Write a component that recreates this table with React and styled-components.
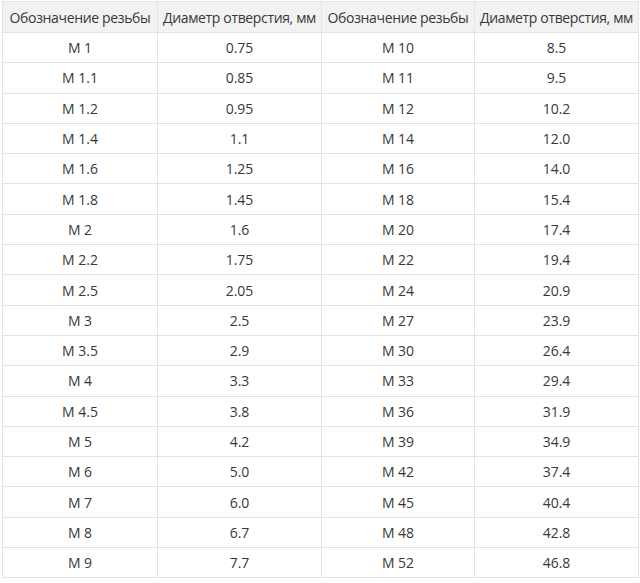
import React from "react";
import styled, { createGlobalStyle } from "styled-components";

const Global = createGlobalStyle`
  html, body { margin: 0; padding: 0; background: #fff; }
  body { font-family: "Open Sans", "Liberation Sans", Arial, sans-serif; }
`;

const Wrap = styled.div`
  padding: 1px 2px 0 2px;
`;

const Table = styled.table`
  border-collapse: collapse;
  width: 636px;
  table-layout: fixed;
  color: #383838;
  font-size: 14px;
`;

const Col = styled.col`
  width: ${(p) => p.$w}px;
`;

const Th = styled.th`
  background: #f2f2f2;
  border: 1px solid #e3e3e3;
  font-weight: 400;
  height: 30px;
  padding: 0 1px;
  text-align: center;
  white-space: nowrap;
  letter-spacing: -0.35px;
  font-size: 14px;
  overflow: hidden;
`;

const Row = styled.tr`
  height: 30.3px;
`;

const Td = styled.td`
  border: 1px solid #e3e3e3;
  text-align: center;
  padding: 0;
`;

const left = [
  ["M 1", "0.75"], ["M 1.1", "0.85"], ["M 1.2", "0.95"], ["M 1.4", "1.1"],
  ["M 1.6", "1.25"], ["M 1.8", "1.45"], ["M 2", "1.6"], ["M 2.2", "1.75"],
  ["M 2.5", "2.05"], ["M 3", "2.5"], ["M 3.5", "2.9"], ["M 4", "3.3"],
  ["M 4.5", "3.8"], ["M 5", "4.2"], ["M 6", "5.0"], ["M 7", "6.0"],
  ["M 8", "6.7"], ["M 9", "7.7"],
];
const right = [
  ["M 10", "8.5"], ["M 11", "9.5"], ["M 12", "10.2"], ["M 14", "12.0"],
  ["M 16", "14.0"], ["M 18", "15.4"], ["M 20", "17.4"], ["M 22", "19.4"],
  ["M 24", "20.9"], ["M 27", "23.9"], ["M 30", "26.4"], ["M 33", "29.4"],
  ["M 36", "31.9"], ["M 39", "34.9"], ["M 42", "37.4"], ["M 45", "40.4"],
  ["M 48", "42.8"], ["M 52", "46.8"],
];

export default function App() {
  return (
    <Wrap>
      <Global />
      <Table>
        <colgroup>
          <Col $w={155} />
          <Col $w={164} />
          <Col $w={153} />
          <Col $w={164} />
        </colgroup>
        <thead>
          <tr>
            <Th>Обозначение резьбы</Th>
            <Th>Диаметр отверстия, мм</Th>
            <Th>Обозначение резьбы</Th>
            <Th>Диаметр отверстия, мм</Th>
          </tr>
        </thead>
        <tbody>
          {left.map((l, i) => (
            <Row key={i}>
              <Td>{l[0]}</Td>
              <Td>{l[1]}</Td>
              <Td>{right[i][0]}</Td>
              <Td>{right[i][1]}</Td>
            </Row>
          ))}
        </tbody>
      </Table>
    </Wrap>
  );
}
